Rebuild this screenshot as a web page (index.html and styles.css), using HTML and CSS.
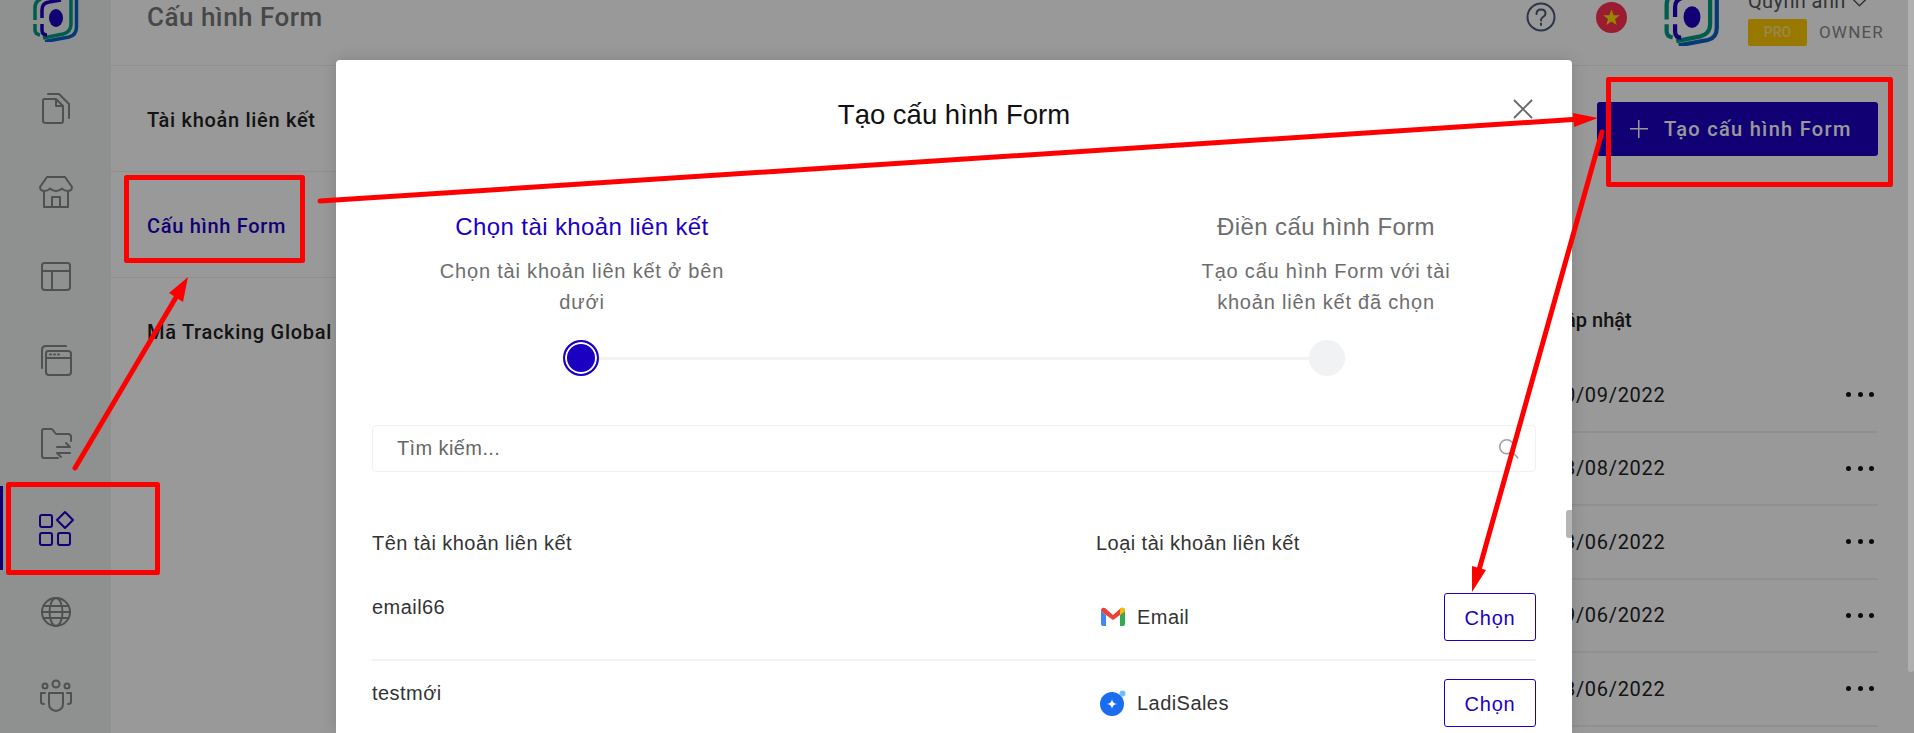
FILE: index.html
```html
<!DOCTYPE html>
<html lang="vi">
<head>
    <meta charset="UTF-8">
    <title>Cấu hình Form</title>
    <link rel="stylesheet" href="styles.css">
</head>
<body>
<svg width="0" height="0" class="defs">
    <symbol id="logo" viewBox="0 0 46 48">
        <path d="M2 26V14Q2 7 8 5M2 30V36Q2 40 7 41M10 44L30 40Q38 38 38 30V0" fill="none" stroke="#00997f" stroke-width="3.500"/>
        <path d="M12 47.500L36 43Q43.500 41 43.500 33V5Q43.500 1 40 -3" fill="none" stroke="#0b62c4" stroke-width="3.500"/>
        <path d="M28 6L16 8Q9 9 9 16V24M9 30V36Q9 41 14 41" fill="none" stroke="#1c00c2" stroke-width="3.500"/>
        <ellipse cx="23" cy="24" rx="7" ry="9" fill="#1c00c2"/>
    </symbol>
</svg>

<div class="app">
    <!--thanh bên-->
    <div class="sidebar">
        <div class="side-logo"><svg width="46" height="48"><use href="#logo"/></svg></div>
        <div class="side-item">
            <svg width="32" height="34" viewBox="0 0 32 34"><path d="M4 8H16L23 15V30Q23 32 21 32H6Q3 32 3 30V10Q3 8 4 8ZM16 8V15H23M8 3H19L29 13V27"/></svg>
        </div>
        <div class="side-item">
            <svg width="36" height="34" viewBox="0 0 36 34"><path d="M9 2H27L34 12Q34 16 29.500 16Q26 16 24 13.500Q21.500 16 18 16Q14.500 16 12 13.500Q10 16 6.500 16Q2 16 2 12ZM6 17V32H30V17M14 32V22H22V32"/></svg>
        </div>
        <div class="side-item">
            <svg width="32" height="32" viewBox="0 0 32 32"><path d="M5 3H27Q30 3 30 5V27Q30 30 27 30H5Q2 30 2 27V5Q2 3 5 3ZM2 11H30M12 11V30"/></svg>
        </div>
        <div class="side-item">
            <svg width="34" height="34" viewBox="0 0 34 34"><path d="M3 25V7Q3 3 7 3H27M9 8H29Q32 8 32 11V29Q32 32 29 32H10Q7 32 7 29V11Q7 8 9 8ZM7 15H32M11 11.500H12M15 11.500H16M19 11.500H20"/></svg>
        </div>
        <div class="side-item">
            <svg width="32" height="32" viewBox="0 0 32 32"><path d="M18 30H4Q2 30 2 28V3Q2 1 4 1H12L16 6H28Q31 6 31 9V13M17 19H30L26 15M30 25H17L21 29"/></svg>
        </div>
        <div class="side-item current">
            <svg width="36" height="36" viewBox="0 0 36 36"><rect x="2" y="5" width="12" height="12" rx="2"/><rect x="2" y="23" width="12" height="12" rx="2"/><rect x="20" y="23" width="12" height="12" rx="2"/><path d="M27 2L35 10L27 18L19 10Z"/></svg>
        </div>
        <div class="side-item">
            <svg width="32" height="32" viewBox="0 0 32 32"><circle cx="16" cy="16" r="14"/><ellipse cx="16" cy="16" rx="6.500" ry="14"/><path d="M4 10H28M4 22H28M2 16H30"/></svg>
        </div>
        <div class="side-item">
            <svg width="34" height="34" viewBox="0 0 34 34"><circle cx="17" cy="5" r="3.500"/><circle cx="6" cy="7" r="2.500"/><circle cx="28" cy="7" r="2.500"/><path d="M10 14H24V25Q24 31 17 32Q10 31 10 25ZM6 14H2V23Q2 25 5 25M28 14H32V23Q32 25 29 25"/></svg>
        </div>
    </div>

    <div class="main">
        <div class="header">
            <div class="page-title">Cấu hình Form</div>
            <div class="header-right">
                <svg class="help" width="30" height="30" viewBox="0 0 30 30"><circle cx="15" cy="15" r="13.500"/><path d="M10.500 12Q10.500 7.500 15 7.500Q19.500 7.500 19.500 11.500Q19.500 13.500 17 15Q15 16.200 15 18.500M15 21.500V23"/></svg>
                <svg class="flag" width="31" height="31" viewBox="0 0 31 31"><circle cx="15.500" cy="15.500" r="15.500" fill="#ff3050"/><polygon points="15.500,7.500 17.700,13.200 23.800,13.300 19,17 20.700,23 15.500,19.500 10.300,23 12,17 7.200,13.300 13.300,13.200" fill="#ffe000"/></svg>
                <svg class="avatar" width="56" height="58"><use href="#logo"/></svg>
                <div class="user">
                    <div class="user-name">Quỳnh anh
                        <svg width="17" height="10" viewBox="0 0 18 10"><path d="M1 1L9 9L17 1"/></svg>
                    </div>
                    <div class="user-role"><span class="badge">PRO</span><span class="role">OWNER</span></div>
                </div>
            </div>
        </div>

        <div class="content">
            <div class="submenu">
                <div class="submenu-item">Tài khoản liên kết</div>
                <div class="submenu-item active">Cấu hình Form</div>
                <div class="submenu-item">Mã Tracking Global</div>
            </div>
            <div class="panel">
                <div class="toolbar">
                    <div class="btn-create"><span class="plus"></span>Tạo cấu hình Form</div>
                </div>
                <div class="table-head"><span class="col-date">Cập nhật</span><span class="dots"></span></div>
                <div class="table-row"><span class="col-date">20/09/2022</span><span class="dots"><i></i><i></i><i></i></span></div>
                <div class="table-row"><span class="col-date">18/08/2022</span><span class="dots"><i></i><i></i><i></i></span></div>
                <div class="table-row"><span class="col-date">13/06/2022</span><span class="dots"><i></i><i></i><i></i></span></div>
                <div class="table-row"><span class="col-date">09/06/2022</span><span class="dots"><i></i><i></i><i></i></span></div>
                <div class="table-row"><span class="col-date">08/06/2022</span><span class="dots"><i></i><i></i><i></i></span></div>
            </div>
        </div>
    </div>
</div>

<div class="backdrop"></div>
<div class="page-thumb"></div>

<!--hộp thoại-->
<div class="modal">
    <div class="modal-head">
        <div class="modal-title">Tạo cấu hình Form</div>
        <svg class="modal-close" width="20" height="20" viewBox="0 0 20 20"><path d="M1 1L19 19M19 1L1 19"/></svg>
    </div>
    <div class="steps">
        <div class="step on">
            <div class="step-title">Chọn tài khoản liên kết</div>
            <div class="step-desc">Chọn tài khoản liên kết ở bên dưới</div>
        </div>
        <div class="step">
            <div class="step-title">Điền cấu hình Form</div>
            <div class="step-desc">Tạo cấu hình Form với tài khoản liên kết đã chọn</div>
        </div>
    </div>
    <div class="progress">
        <span class="dot on"></span>
        <span class="track"></span>
        <span class="dot"></span>
    </div>
    <div class="search">
        <span>Tìm kiếm...</span>
        <svg width="21" height="21" viewBox="0 0 24 24"><circle cx="10" cy="10" r="8"/><path d="M16 16L23 23"/></svg>
    </div>
    <div class="list-head">
        <span class="list-name">Tên tài khoản liên kết</span>
        <span>Loại tài khoản liên kết</span>
    </div>
    <div class="list-row">
        <span class="list-name name-up">email66</span>
        <span class="list-type">
            <svg width="26" height="20" viewBox="0 0 26 20">
                <path d="M1 4V17Q1 19 3 19H6V8Z" fill="#4285f4"/>
                <path d="M25 4V17Q25 19 23 19H20V8Z" fill="#34a853"/>
                <path d="M1 4Q1 0 5 1L13 8L21 1Q25 0 25 4L20 8L13 13L6 8Z" fill="#ea4335"/>
                <path d="M20 2.500L21 1Q25 0 25 4L20 8Z" fill="#fbbc04"/>
            </svg>
            Email
        </span>
        <span class="btn-pick">Chọn</span>
    </div>
    <div class="list-row">
        <span class="list-name name-up">testmới</span>
        <span class="list-type">
            <svg width="26" height="26" viewBox="0 0 26 26">
                <circle cx="12" cy="14" r="12" fill="#1a6cf0"/>
                <circle cx="22.500" cy="3.500" r="3" fill="#6cc0ff"/>
                <path d="M12 9Q12.500 13.500 17 14Q12.500 14.500 12 19Q11.500 14.500 7 14Q11.500 13.500 12 9Z" fill="#fff"/>
            </svg>
            LadiSales
        </span>
        <span class="btn-pick">Chọn</span>
    </div>
    <div class="modal-thumb"></div>
</div>

<!--chú thích đỏ trên ảnh chụp-->
<svg class="notes" width="1914" height="733" viewBox="0 0 1914 733">
    <rect x="8.500" y="484.500" width="149" height="88"/>
    <rect x="126.500" y="177.500" width="176" height="83"/>
    <rect x="1608.500" y="79.500" width="282" height="105"/>
    <path d="M320 201L1580 119M75 468L178 294M1602 132L1479 570"/>
    <polygon points="1598,118 1573,113 1574,127"/>
    <polygon points="188,277 169,293 183,302"/>
    <polygon points="1472,592 1472,566 1486,570"/>
</svg>
</body>
</html>
```

FILE: styles.css
```css
* {
    padding: 0;
    margin: 0;
    box-sizing: border-box;
}

html, body {
    height: 100%;
    overflow: hidden;
}

body {
    position: relative;
    background: #fff;
    font-family: Roboto, "Liberation Sans", sans-serif;
    color: #222;
}

.defs {
    position: absolute;
}

.app {
    display: flex;
    height: 764px;
    overflow: hidden;
    margin-top: -31px;
    padding-right: 6px;
}

/* thanh bên */
.sidebar {
    width: 111px;
    flex-shrink: 0;
    background: #eef1f0;
}

.side-logo {
    height: 97px;
    display: flex;
    align-items: center;
    justify-content: center;
}

.side-item {
    height: 84px;
    display: flex;
    align-items: center;
    justify-content: center;
    border-left: 3px solid transparent;
    padding-right: 3px;
}

.side-item svg {
    fill: none;
    stroke: #858585;
    stroke-width: 2;
    stroke-linejoin: round;
    stroke-linecap: round;
}

.side-item.current {
    border-left-color: #1c00c2;
}

.side-item.current svg {
    stroke: #1c00c2;
}

/* phần chính */
.main {
    flex: 1;
    min-width: 0;
}

.header {
    height: 97px;
    border-bottom: 1px solid #f0f0f0;
    display: flex;
    align-items: center;
    justify-content: space-between;
    padding: 0 24px 0 36px;
}

.page-title {
    font-size: 26px;
    font-weight: 500;
    letter-spacing: 0.500px;
    color: #777;
}

.header-right {
    display: flex;
    align-items: center;
}

.help {
    fill: none;
    stroke: #4a5a78;
    stroke-width: 2;
    stroke-linecap: round;
}

.flag {
    margin-left: 40px;
}

.avatar {
    margin-left: 37px;
}

.user {
    margin-left: 28px;
}

.user-name {
    font-size: 20px;
    letter-spacing: 0.400px;
    line-height: 24px;
    color: #555;
    white-space: nowrap;
}

.user-name svg {
    fill: none;
    stroke: #555;
    stroke-width: 1.500;
    vertical-align: 1px;
}

.user-role {
    margin-top: 6px;
    display: flex;
    align-items: center;
}

.badge {
    width: 59px;
    height: 27px;
    line-height: 27px;
    border-radius: 2px;
    background: #ffc800;
    color: #ffe37f;
    text-align: center;
    font-size: 14px;
    font-weight: 500;
}

.role {
    margin-left: 12px;
    font-size: 17px;
    letter-spacing: 1.200px;
    color: #888;
}

.content {
    display: flex;
}

.submenu {
    width: 260px;
    flex-shrink: 0;
}

.submenu-item {
    height: 106px;
    border-bottom: 1px solid #f0f0f0;
    padding: 2px 0 0 36px;
    display: flex;
    align-items: center;
    font-size: 20px;
    font-weight: 500;
    letter-spacing: 0.700px;
    white-space: nowrap;
}

.submenu-item:last-child {
    border-bottom: 0;
}

.submenu-item.active {
    color: #1c00c2;
}

.panel {
    flex: 1;
    padding: 36px 30px 0 0;
}

.toolbar {
    display: flex;
    justify-content: flex-end;
    margin-bottom: 128px;
}

.btn-create {
    width: 281px;
    height: 54px;
    border-radius: 3px;
    background: #1c00c2;
    color: #fff;
    display: flex;
    align-items: center;
    padding-left: 33px;
    font-size: 20px;
    font-weight: 500;
    letter-spacing: 1.300px;
}

.plus {
    width: 18px;
    height: 18px;
    margin-right: 16px;
    background: linear-gradient(#fff, #fff) center / 100% 1.500px no-repeat,
                linear-gradient(#fff, #fff) center / 1.500px 100% no-repeat;
}

.table-head {
    height: 75px;
    padding-bottom: 3px;
    display: flex;
    align-items: center;
    justify-content: flex-end;
    font-size: 20px;
    font-weight: 500;
}

.table-row {
    height: 73.500px;
    border-bottom: 2px solid #f0f0f0;
    display: flex;
    align-items: center;
    justify-content: flex-end;
    font-size: 20px;
    letter-spacing: 0.700px;
}

.col-date {
    width: 114px;
    white-space: nowrap;
}

.dots {
    display: flex;
    gap: 6.500px;
    width: 212px;
    justify-content: flex-end;
    padding-right: 4px;
}

.dots i {
    width: 5px;
    height: 5px;
    border-radius: 50%;
    background: #111;
}

/* lớp phủ */
.backdrop {
    position: absolute;
    inset: 0;
    background: rgba(0, 0, 0, 0.4);
}

.page-thumb {
    position: absolute;
    top: 0;
    right: 0;
    width: 6px;
    height: 672px;
    background: #b0b0b0;
    border-radius: 0 0 3px 3px;
}

/* hộp thoại */
.modal {
    position: absolute;
    left: 336px;
    top: 60px;
    width: 1236px;
    height: 673px;
    overflow: hidden;
    background: #fff;
    border-radius: 4px 4px 0 0;
    padding: 0 36px;
    box-shadow: 0 0 16px rgba(0, 0, 0, 0.15);
    font-family: "Liberation Sans", Arial, sans-serif;
}

.modal-thumb {
    position: absolute;
    right: 0;
    top: 450px;
    width: 6px;
    height: 28px;
    border-radius: 3px 0 0 3px;
    background: #b5b5b5;
}

.modal-head {
    position: relative;
    height: 110px;
    display: flex;
    align-items: center;
    justify-content: center;
}

.modal-title {
    font-size: 27.500px;
    color: #111;
}

.modal-close {
    position: absolute;
    right: 3px;
    top: 39px;
    stroke: #666;
    stroke-width: 1.800;
}

.steps {
    display: flex;
    justify-content: space-between;
    padding: 41px 50px 0 50px;
}

.step {
    width: 320px;
    text-align: center;
    color: #6d6d6d;
}

.step-title {
    font-size: 24px;
    letter-spacing: 0.400px;
    line-height: 32px;
}

.step.on .step-title {
    color: #1c00c2;
}

.step-desc {
    margin-top: 13px;
    font-size: 20px;
    letter-spacing: 0.800px;
    line-height: 31px;
    padding: 0 12px;
}

.progress {
    display: flex;
    align-items: center;
    padding: 0 191px 0 191px;
    margin-top: 22px;
}

.dot {
    width: 36px;
    height: 36px;
    border-radius: 50%;
    background: #f1f2f4;
    flex-shrink: 0;
}

.dot.on {
    background: #1c00c2;
    border: 2px solid #1c00c2;
    box-shadow: inset 0 0 0 2px #fff;
}

.track {
    flex: 1;
    height: 3px;
    background: #f3f3f3;
}

.search {
    height: 47px;
    margin-top: 49px;
    border: 1px solid #f1f1f1;
    border-radius: 4px;
    display: flex;
    align-items: center;
    justify-content: space-between;
    padding: 0 16px 0 24px;
    font-size: 20px;
    letter-spacing: 0.400px;
    color: #666;
}

.search svg {
    fill: none;
    stroke: #9aa0aa;
    stroke-width: 1.800;
}

.list-head {
    display: flex;
    margin-top: 58px;
    font-size: 20px;
    letter-spacing: 0.450px;
    line-height: 26px;
    color: #333;
}

.list-name {
    width: 724px;
    flex-shrink: 0;
}

.list-row {
    height: 86px;
    display: flex;
    align-items: center;
    border-bottom: 2px solid #f3f3f3;
    font-size: 20px;
    letter-spacing: 0.450px;
    color: #333;
}

.list-head + .list-row {
    margin-top: 19px;
}

.name-up {
    padding-bottom: 20px;
}

.list-type {
    display: flex;
    align-items: center;
    gap: 11px;
    padding-left: 4px;
}

.btn-pick {
    width: 92px;
    height: 48px;
    line-height: 48px;
    margin-left: auto;
    text-align: center;
    letter-spacing: 0.800px;
    border: 1px solid #1c00c2;
    border-radius: 3px;
    color: #1c00c2;
}

/* chú thích đỏ */
.notes {
    position: absolute;
    left: 0;
    top: 0;
    fill: #f00;
}

.notes rect {
    fill: none;
    stroke: #f00;
    stroke-width: 5;
    stroke-linejoin: round;
}

.notes path {
    fill: none;
    stroke: #f00;
    stroke-width: 5;
    stroke-linecap: round;
}
```
